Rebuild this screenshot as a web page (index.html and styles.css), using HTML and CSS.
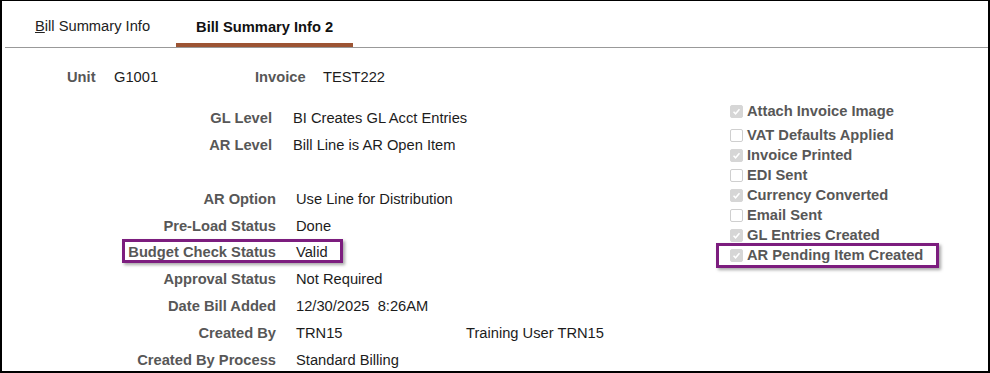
FILE: index.html
```html
<!DOCTYPE html>
<html lang="en">
<head>
    <meta charset="UTF-8">
    <meta name="viewport" content="width=device-width, initial-scale=1.0">
    <title>Bill Summary Info 2</title>
    <link rel="stylesheet" href="styles.css">
</head>
<body>
    <div class="frame">
        <div class="tabs">
            <div class="tab"><u>B</u>ill Summary Info</div>
            <div class="tab active">Bill Summary Info 2</div>
        </div>

        <div class="content">
            <div class="fields">
                <div class="head-row">
                    <span class="label unit-lbl">Unit</span>
                    <span class="value unit-val">G1001</span>
                    <span class="label inv-lbl">Invoice</span>
                    <span class="value">TEST222</span>
                </div>

                <div class="rows">
                    <div class="row narrow"><span class="label">GL Level</span><span class="value">BI Creates GL Acct Entries</span></div>
                    <div class="row narrow"><span class="label">AR Level</span><span class="value">Bill Line is AR Open Item</span></div>
                    <div class="row"></div>
                    <div class="row"><span class="label">AR Option</span><span class="value">Use Line for Distribution</span></div>
                    <div class="row"><span class="label">Pre-Load Status</span><span class="value">Done</span></div>
                    <div class="row highlight"><span class="label">Budget Check Status</span><span class="value">Valid</span></div>
                    <div class="row"><span class="label">Approval Status</span><span class="value">Not Required</span></div>
                    <div class="row"><span class="label">Date Bill Added</span><span class="value">12/30/2025&nbsp; 8:26AM</span></div>
                    <div class="row"><span class="label">Created By</span><span class="value user-id">TRN15</span><span class="value">Training User TRN15</span></div>
                    <div class="row"><span class="label">Created By Process</span><span class="value">Standard Billing</span></div>
                </div>
            </div>

            <div class="flags">
                <div class="flag first"><span class="box checked"><svg viewBox="0 0 13 13"><path d="M3 6.8 L5.4 9.2 L10 3.8" /></svg></span>Attach Invoice Image</div>
                <div class="flag"><span class="box"></span>VAT Defaults Applied</div>
                <div class="flag"><span class="box checked"><svg viewBox="0 0 13 13"><path d="M3 6.8 L5.4 9.2 L10 3.8" /></svg></span>Invoice Printed</div>
                <div class="flag"><span class="box"></span>EDI Sent</div>
                <div class="flag"><span class="box checked"><svg viewBox="0 0 13 13"><path d="M3 6.8 L5.4 9.2 L10 3.8" /></svg></span>Currency Converted</div>
                <div class="flag"><span class="box"></span>Email Sent</div>
                <div class="flag"><span class="box checked"><svg viewBox="0 0 13 13"><path d="M3 6.8 L5.4 9.2 L10 3.8" /></svg></span>GL Entries Created</div>
                <div class="flag highlight"><span class="box checked"><svg viewBox="0 0 13 13"><path d="M3 6.8 L5.4 9.2 L10 3.8" /></svg></span>AR Pending Item Created</div>
            </div>
        </div>
    </div>
</body>
</html>
```

FILE: styles.css
```css
body {
    margin: 0;
    font-family: "Liberation Sans", Arial, sans-serif;
    font-size: 14.7px;
    color: #1c1c1c;
    background-color: #fff;
}

.frame {
    width: 990px;
    height: 373px;
    box-sizing: border-box;
    border: 2px solid #000;
    border-top-width: 1px;
    overflow: hidden;
}

.tabs {
    display: flex;
    margin-left: 3px;
    padding-left: 10px;
    border-bottom: 1px solid #999;
    height: 46px;
}

.tab {
    padding: 0 20px;
    margin-right: 6px;
    line-height: 50px;
    height: 46px;
    box-sizing: border-box;
    color: #222;
}

.tab.active {
    font-weight: bold;
    color: #111;
    border-bottom: 4px solid #9c5433;
    line-height: 52px;
}

.content {
    display: flex;
}

.fields {
    width: 715px;
}

.label {
    font-weight: bold;
    color: #575757;
}

.value {
    color: #1c1c1c;
}

.head-row {
    display: flex;
    align-items: center;
    height: 20px;
    margin-top: 19px;
    padding-left: 65px;
}

.unit-lbl {
    width: 47px;
}

.unit-val {
    width: 141px;
}

.inv-lbl {
    width: 68px;
}

.rows {
    margin-top: 18px;
}

.row {
    display: flex;
    align-items: center;
    height: 26.8px;
    position: relative;
}

.row .label {
    width: 274px;
    text-align: right;
    margin-right: 20px;
}

.row.narrow .label {
    width: 270px;
    margin-right: 21px;
}

.user-id {
    width: 170px;
}

.row.highlight::after {
    content: "";
    position: absolute;
    left: 120px;
    top: 0;
    width: 215px;
    height: 18px;
    border: 3px solid #7c1d7e;
    box-shadow: 2px 2px 3px rgba(0, 0, 0, 0.35);
}

.flags {
    padding-top: 53px;
    padding-left: 13px;
}

.flag {
    display: flex;
    align-items: center;
    height: 20px;
    font-weight: bold;
    color: #575757;
    position: relative;
}

.flag.first {
    margin-bottom: 4px;
}

.box {
    width: 13px;
    height: 13px;
    box-sizing: border-box;
    border: 1px solid #cfcfcf;
    border-radius: 2px;
    background-color: #fff;
    margin-right: 4px;
    display: flex;
}

.box.checked {
    background-color: #d6d6d6;
    border-color: #d6d6d6;
}

.box svg {
    width: 11px;
    height: 11px;
}

.box path {
    fill: none;
    stroke: #fff;
    stroke-width: 1.8;
}

.flag.highlight::after {
    content: "";
    position: absolute;
    left: -14px;
    top: -2px;
    width: 217px;
    height: 19px;
    border: 3px solid #7c1d7e;
    box-shadow: 2px 2px 3px rgba(0, 0, 0, 0.35);
}
```
